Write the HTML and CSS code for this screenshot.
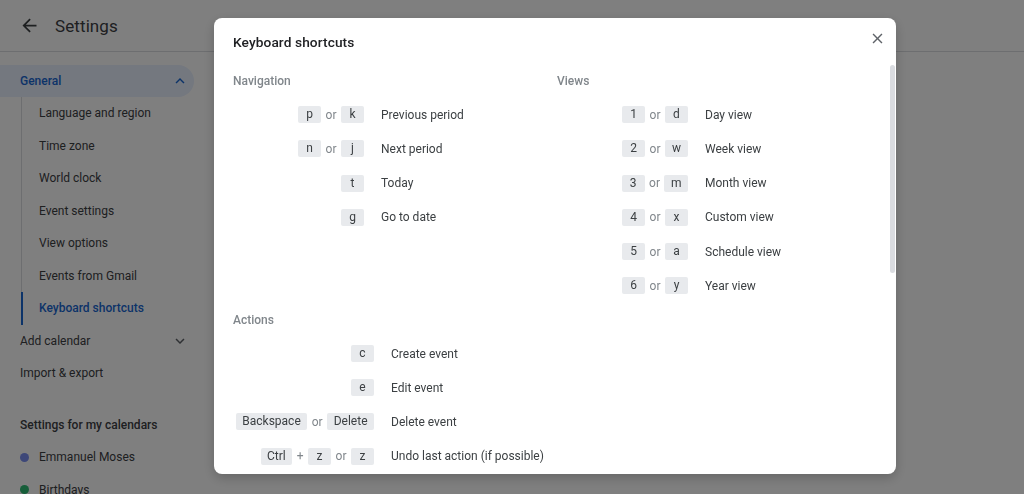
FILE: index.html
```html
<!DOCTYPE html>
<html>
<head>
<meta charset="utf-8">
<link rel="stylesheet" href="styles.css">
</head>
<body>
<div class="app">
  <header class="topbar">
    <span class="back">
      <svg viewBox="0 0 24 24" width="21" height="21"><path d="M20 11H7.83l5.59-5.59L12 4l-8 8 8 8 1.41-1.41L7.83 13H20v-2z" fill="#3c4043"/></svg>
    </span>
    <span class="page-title">Settings</span>
  </header>
  <nav class="sidebar">
    <div class="group-head active">
      <span>General</span>
      <svg class="chev" viewBox="0 0 24 24" width="18" height="18"><path d="M7.41 15.41L12 10.83l4.59 4.58L18 14l-6-6-6 6z" fill="#1967d2"/></svg>
    </div>
    <ul class="sublist">
      <li>Language and region</li>
      <li>Time zone</li>
      <li>World clock</li>
      <li>Event settings</li>
      <li>View options</li>
      <li>Events from Gmail</li>
      <li class="current">Keyboard shortcuts</li>
    </ul>
    <div class="group-head">
      <span>Add calendar</span>
      <svg class="chev" viewBox="0 0 24 24" width="18" height="18"><path d="M7.41 8.59L12 13.17l4.59-4.58L18 10l-6 6-6-6z" fill="#5f6368"/></svg>
    </div>
    <div class="group-head">
      <span>Import &amp; export</span>
    </div>
    <div class="cal-title">Settings for my calendars</div>
    <div class="cal"><span class="dot blue"></span>Emmanuel Moses</div>
    <div class="cal"><span class="dot green"></span>Birthdays</div>
  </nav>
</div>

<div class="overlay"></div>

<div class="dialog">
  <div class="dlg-head">
    <h2>Keyboard shortcuts</h2>
    <span class="close">
      <svg viewBox="0 0 24 24" width="17" height="17"><path d="M19 6.41L17.590 5 12 10.59 6.41 5 5 6.41 10.59 12 5 17.59 6.41 19 12 13.41 17.59 19 19 17.59 13.41 12z" fill="#5f6368"/></svg>
    </span>
  </div>
  <div class="dlg-body">
    <div class="two-col">
      <section class="sect">
        <h3>Navigation</h3>
        <div class="row"><div class="keys"><kbd>p</kbd><i>or</i><kbd>k</kbd></div><div class="lbl">Previous period</div></div>
        <div class="row"><div class="keys"><kbd>n</kbd><i>or</i><kbd>j</kbd></div><div class="lbl">Next period</div></div>
        <div class="row"><div class="keys"><kbd>t</kbd></div><div class="lbl">Today</div></div>
        <div class="row"><div class="keys"><kbd>g</kbd></div><div class="lbl">Go to date</div></div>
      </section>
      <section class="sect">
        <h3>Views</h3>
        <div class="row"><div class="keys"><kbd>1</kbd><i>or</i><kbd>d</kbd></div><div class="lbl">Day view</div></div>
        <div class="row"><div class="keys"><kbd>2</kbd><i>or</i><kbd>w</kbd></div><div class="lbl">Week view</div></div>
        <div class="row"><div class="keys"><kbd>3</kbd><i>or</i><kbd>m</kbd></div><div class="lbl">Month view</div></div>
        <div class="row"><div class="keys"><kbd>4</kbd><i>or</i><kbd>x</kbd></div><div class="lbl">Custom view</div></div>
        <div class="row"><div class="keys"><kbd>5</kbd><i>or</i><kbd>a</kbd></div><div class="lbl">Schedule view</div></div>
        <div class="row"><div class="keys"><kbd>6</kbd><i>or</i><kbd>y</kbd></div><div class="lbl">Year view</div></div>
      </section>
    </div>
    <section class="sect actions">
      <h3>Actions</h3>
      <div class="row"><div class="keys"><kbd>c</kbd></div><div class="lbl">Create event</div></div>
      <div class="row"><div class="keys"><kbd>e</kbd></div><div class="lbl">Edit event</div></div>
      <div class="row"><div class="keys"><kbd>Backspace</kbd><i>or</i><kbd>Delete</kbd></div><div class="lbl">Delete event</div></div>
      <div class="row"><div class="keys"><kbd>Ctrl</kbd><i>+</i><kbd>z</kbd><i>or</i><kbd>z</kbd></div><div class="lbl">Undo last action (if possible)</div></div>
    </section>
  </div>
  <div class="thumb"></div>
</div>
</body>
</html>
```
FILE: styles.css
```css
* { box-sizing: border-box; }
html, body { margin: 0; padding: 0; }
body {
  width: 1024px;
  height: 494px;
  overflow: hidden;
  background: #fff;
  font-family: Roboto, "Liberation Sans", sans-serif;
  color: #3c4043;
}

.app { width: 100%; height: 100%; }

.topbar {
  height: 52px;
  border-bottom: 1px solid #dadce0;
  display: flex;
  align-items: center;
  padding-left: 19px;
}
.back { display: flex; width: 21px; height: 21px; }
.page-title {
  margin-left: 15px;
  font-size: 17px;
  color: #3c4043;
  letter-spacing: 0.1px;
}

.sidebar {
  width: 210px;
  padding-top: 13px;
  font-size: 12px;
}
.group-head {
  height: 32.5px;
  width: 194px;
  display: flex;
  align-items: center;
  justify-content: space-between;
  padding: 0 5px 0 20px;
  color: #3c4043;
  border-radius: 0 16px 16px 0;
}
.group-head.active {
  height: 32px;
  background: #e8f0fe;
  color: #1967d2;
  font-weight: 500;
}
.chev { display: block; }
.sublist {
  list-style: none;
  margin: 0 0 0 21px;
  padding: 0;
  border-left: 1px solid #dadce0;
}
.sublist li {
  height: 32.5px;
  display: flex;
  align-items: center;
  padding-left: 17px;
  color: #3c4043;
}
.sublist li.current {
  color: #1967d2;
  font-weight: 500;
  box-shadow: inset 2px 0 0 #1967d2;
  margin-left: -1px;
  padding-left: 18px;
}
.cal-title {
  margin-top: 19px;
  height: 32.5px;
  display: flex;
  align-items: center;
  padding-left: 20px;
  font-weight: 500;
  color: #3c4043;
}
.cal {
  height: 32.5px;
  display: flex;
  align-items: center;
  padding-left: 20px;
}
.dot {
  width: 9px;
  height: 9px;
  border-radius: 50%;
  margin-right: 10px;
}
.dot.blue { background: #7a8ff0; }
.dot.green { background: #2ebd74; }

.overlay {
  position: fixed;
  inset: 0;
  background: rgba(0, 0, 0, 0.5);
}

.dialog {
  position: fixed;
  left: 214px;
  top: 18px;
  width: 682px;
  height: 456px;
  background: #fff;
  border-radius: 8px;
  overflow: hidden;
  box-shadow: 0 4px 12px rgba(0,0,0,0.2);
}
.dlg-head {
  padding: 14px 19px 0;
  height: 45px;
}
.dlg-head h2 {
  margin: 0;
  font-size: 13.7px;
  line-height: 20px;
  font-weight: 500;
  color: #202124;
  letter-spacing: 0.1px;
}
.close {
  position: absolute;
  top: 11.5px;
  right: 10.5px;
  display: flex;
}
.dlg-body {
  padding: 0 19px;
}
.two-col {
  display: grid;
  grid-template-columns: 324px 1fr;
}
.sect h3 {
  margin: 0;
  height: 34.2px;
  padding-top: 2px;
  line-height: 32px;
  font-size: 12px;
  font-weight: 500;
  color: #80868b;
}
.row {
  height: 34.2px;
  display: grid;
  grid-template-columns: 131px 1fr;
  column-gap: 17px;
  align-items: center;
  padding-top: 1px;
}
.actions .row { grid-template-columns: 141px 1fr; padding-top: 0; }
.keys {
  display: flex;
  justify-content: flex-end;
  align-items: center;
  gap: 4.5px;
}
kbd {
  font-family: Roboto, "Liberation Sans", sans-serif;
  font-size: 12px;
  line-height: 17px;
  height: 17px;
  min-width: 23px;
  padding: 0 6.5px;
  text-align: center;
  background: #e8eaed;
  color: #3c4043;
  border-radius: 2px;
}
.keys i {
  font-style: normal;
  font-size: 12px;
  color: #80868b;
}
.lbl {
  font-size: 12px;
  color: #3c4043;
  white-space: nowrap;
}

.thumb {
  position: absolute;
  right: 1px;
  top: 47px;
  width: 5px;
  height: 208px;
  background: #dadce0;
  border-radius: 3px;
}
```
